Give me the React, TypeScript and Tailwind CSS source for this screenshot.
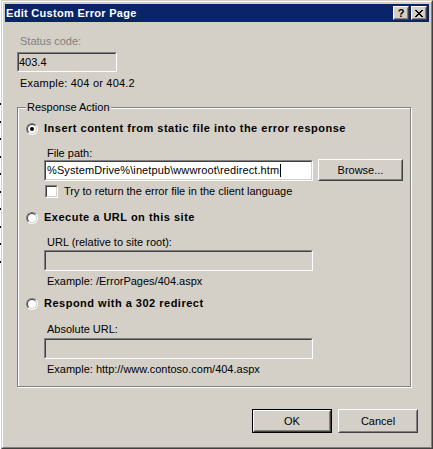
import React from "react";

type BoxProps = { className?: string; inner?: string; children?: React.ReactNode };

function Raised({ className = "", inner = "", children }: BoxProps) {
  return (
    <div className={`border border-t-white border-l-white border-r-[#404040] border-b-[#404040] ${className}`}>
      <div
        className={`flex h-full w-full items-center justify-center border border-t-[#d4d0c8] border-l-[#d4d0c8] border-r-[#808080] border-b-[#808080] bg-[#d4d0c8] ${inner}`}
      >
        {children}
      </div>
    </div>
  );
}

function Sunken({ className = "", inner = "bg-white", children }: BoxProps) {
  return (
    <div className={`border border-t-[#808080] border-l-[#808080] border-r-white border-b-white ${className}`}>
      <div
        className={`flex h-full w-full items-center overflow-hidden border border-t-[#404040] border-l-[#404040] border-r-[#d4d0c8] border-b-[#d4d0c8] ${inner}`}
      >
        {children}
      </div>
    </div>
  );
}

function Radio({ checked = false }: { checked?: boolean }) {
  return (
    <div className="size-[12px] shrink-0 rounded-full border border-t-[#808080] border-l-[#808080] border-r-white border-b-white">
      <div className="flex size-full items-center justify-center rounded-full border border-t-[#404040] border-l-[#404040] border-r-[#d4d0c8] border-b-[#d4d0c8] bg-white">
        {checked && <div className="size-[4px] rounded-full bg-black" />}
      </div>
    </div>
  );
}

function CloseGlyph() {
  return (
    <svg width="8" height="7" viewBox="0 0 8 7" shapeRendering="crispEdges">
      <path
        d="M0 0h2v1H0zM6 0h2v1H6zM1 1h2v1H1zM5 1h2v1H5zM2 2h4v1H2zM3 3h2v1H3zM2 4h4v1H2zM1 5h2v1H1zM5 5h2v1H5zM0 6h2v1H0zM6 6h2v1H6z"
        fill="#000"
      />
    </svg>
  );
}

export default function App() {
  const dots = Array.from({ length: 10 });

  return (
    <div className="flex h-[449px] w-[433px] overflow-hidden bg-white font-['Liberation_Sans',Arial,sans-serif] text-[11px] leading-[13px] text-black">
      {/* bit of the window behind */}
      <div className="flex w-[1px] shrink-0 flex-col gap-[15.5px] pt-[103px]">
        {dots.map((_, i) => (
          <div key={i} className="h-[2px] w-[1px] bg-black" />
        ))}
      </div>

      <div className="flex h-[449px] w-[432px] flex-col border border-t-[#d4d0c8] border-l-[#d4d0c8] border-r-[#404040] border-b-[#404040]">
        <div className="flex flex-1 flex-col border border-t-white border-l-white border-r-[#808080] border-b-[#808080] bg-[#d4d0c8] p-[2px]">
          {/* title bar */}
          <div className="flex h-[18px] items-center justify-between bg-[#0a246a] pl-[1px] pr-[2px]">
            <span className="font-bold tracking-[0.3px] text-white">Edit Custom Error Page</span>
            <div className="flex gap-[2px]">
              <Raised className="h-[14px] w-[16px]">
                <span className="text-[11px] font-bold leading-[10px]">?</span>
              </Raised>
              <Raised className="h-[14px] w-[16px]">
                <CloseGlyph />
              </Raised>
            </div>
          </div>

          <div className="flex flex-1 flex-col pl-[12px]">
            <div className="mt-[13px] pl-[3px] text-[#808080]">Status code:</div>
            <Sunken className="mt-[4px] h-[20px] w-[100px]" inner="bg-[#d4d0c8]">
              <span>403.4</span>
            </Sunken>
            <div className="mt-[5px] pl-[3px] tracking-[0.2px]">Example: 404 or 404.2</div>

            {/* group box */}
            <div className="relative mt-[17px] w-[394px] border border-[#808080] pb-[10px] pl-[8px] pt-[14px] shadow-[inset_1px_1px_0_#fff,1px_1px_0_#fff]">
              <span className="absolute left-[8px] top-[-7px] bg-[#d4d0c8] px-[1px]">Response Action</span>

              <div className="flex h-[13px] items-center gap-[6px]">
                <Radio checked />
                <span className="font-bold tracking-[0.5px]">Insert content from static file into the error response</span>
              </div>
              <div className="ml-[18px] flex flex-col">
                <div className="mt-[12px] pl-[3px]">File path:</div>
                <div className="flex items-start gap-[5px]">
                  <Sunken className="h-[21px] w-[269px]">
                    <span className="pl-[1px] tracking-[0.1px]">%SystemDrive%\inetpub\wwwroot\redirect.htm</span>
                    <span className="ml-[1px] h-[13px] w-[1px] bg-black" />
                  </Sunken>
                  <Raised className="-mt-[1px] h-[22px] w-[85px]">Browse...</Raised>
                </div>
                <div className="mt-[4px] flex h-[13px] items-center gap-[6px]">
                  <Sunken className="ml-[1px] size-[13px] shrink-0" />
                  <span>Try to return the error file in the client language</span>
                </div>
              </div>

              <div className="mt-[13px] flex h-[13px] items-center gap-[6px]">
                <Radio />
                <span className="font-bold tracking-[0.5px]">Execute a URL on this site</span>
              </div>
              <div className="ml-[18px] flex flex-col">
                <div className="mt-[12px] pl-[3px]">URL (relative to site root):</div>
                <Sunken className="mt-[1px] h-[21px] w-[269px]" inner="bg-[#d4d0c8]" />
                <div className="mt-[4px] pl-[3px]">Example: /ErrorPages/404.aspx</div>
              </div>

              <div className="mt-[9px] flex h-[13px] items-center gap-[6px]">
                <Radio />
                <span className="font-bold tracking-[0.5px]">Respond with a 302 redirect</span>
              </div>
              <div className="ml-[18px] flex flex-col">
                <div className="mt-[13px] pl-[3px]">Absolute URL:</div>
                <Sunken className="mt-[2px] h-[21px] w-[269px]" inner="bg-[#d4d0c8]" />
                <div className="mt-[4px] pl-[3px]">Example: http://www.contoso.com/404.aspx</div>
              </div>
            </div>

            {/* buttons */}
            <div className="mt-[22px] flex justify-end gap-[6px] pr-[11px]">
              <div className="h-[24px] w-[80px] border border-black">
                <Raised className="h-full w-full">OK</Raised>
              </div>
              <Raised className="h-[24px] w-[80px]">Cancel</Raised>
            </div>
          </div>
        </div>
      </div>
    </div>
  );
}
